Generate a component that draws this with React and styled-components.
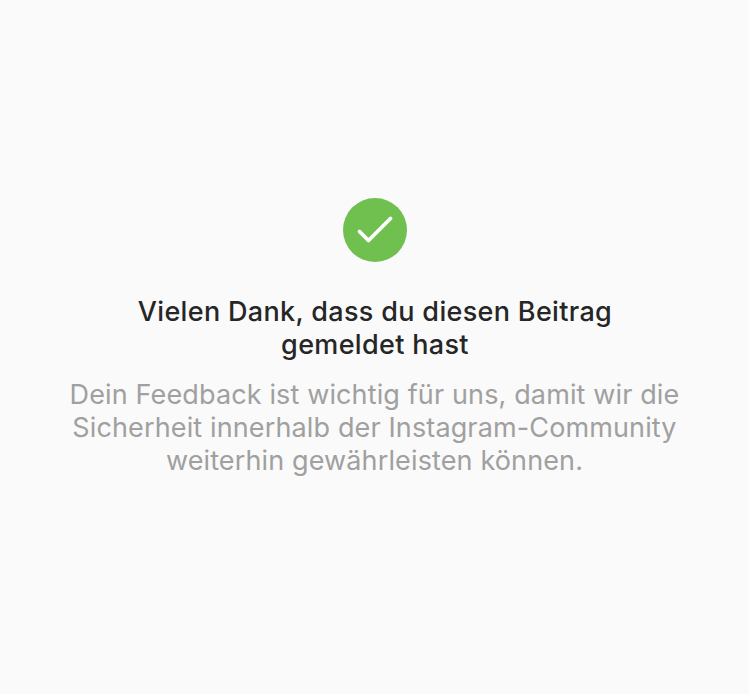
import React from "react";
import styled, { createGlobalStyle } from "styled-components";

const Global = createGlobalStyle`
  html, body { margin: 0; padding: 0; background: #fafafa; }
`;

const Page = styled.div`
  width: 749px;
  height: 694px;
  background: #fafafa;
  display: flex;
  flex-direction: column;
  align-items: center;
  padding-top: 198px;
  box-sizing: border-box;
  font-family: Inter, "Liberation Sans", sans-serif;
`;

const Badge = styled.div`
  width: 64px;
  height: 64px;
  border-radius: 50%;
  background: #70c050;
  display: flex;
  align-items: center;
  justify-content: center;
`;

const Title = styled.h1`
  margin: 33px 0 0;
  padding-left: 1px;
  font-size: 27px;
  line-height: 33px;
  font-weight: 500;
  letter-spacing: 0.33px;
  color: #262626;
  text-align: center;
`;

const Body = styled.p`
  margin: 17px 0 0;
  font-size: 27px;
  line-height: 33px;
  font-weight: 400;
  letter-spacing: 0.13px;
  color: #a0a0a0;
  text-align: center;
`;

export default function App() {
  return (
    <Page>
      <Global />
      <Badge>
        <svg width="64" height="64" viewBox="0 0 64 64" fill="none">
          <path d="M16.5 33.5 L25.5 42.5 L47.5 20.5" stroke="#fff" strokeWidth="3.8" strokeLinecap="round" strokeLinejoin="round" />
        </svg>
      </Badge>
      <Title>Vielen Dank, dass du diesen Beitrag<br />gemeldet hast</Title>
      <Body>Dein Feedback ist wichtig für uns, damit wir die<br />Sicherheit innerhalb der Instagram-Community<br />weiterhin gewährleisten können.</Body>
    </Page>
  );
}
